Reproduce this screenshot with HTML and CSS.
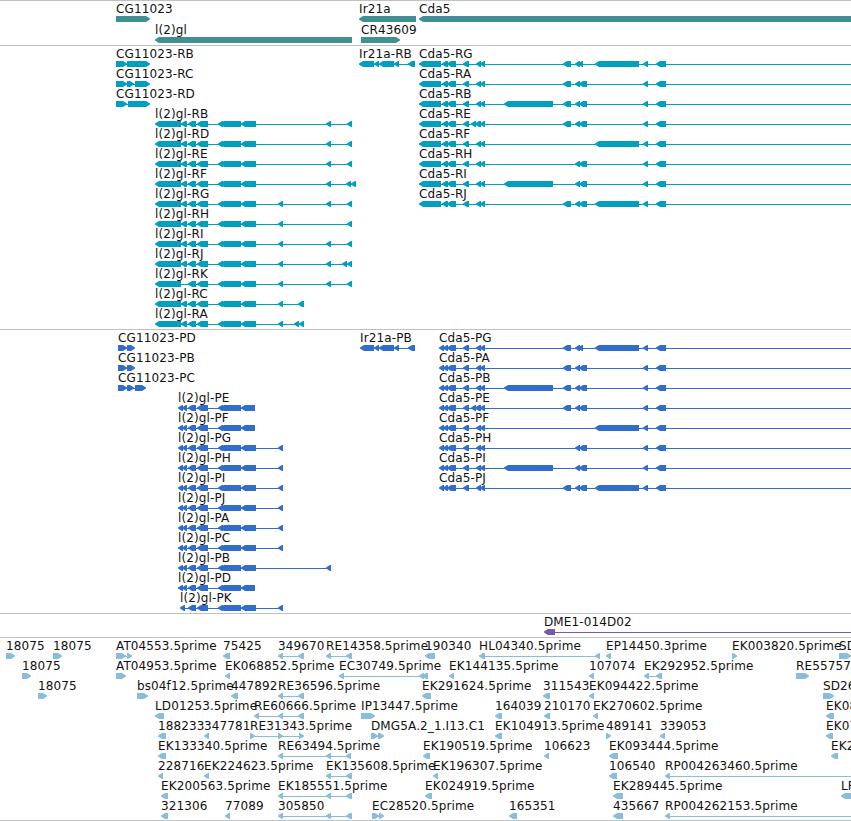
FILE: index.html
```html
<!DOCTYPE html>
<html lang="en">
<head>
    <meta charset="UTF-8">
    <meta name="viewport" content="width=device-width, initial-scale=1.0">
    <title>Genome browser</title>
    <link rel="stylesheet" href="styles.css">
</head>
<body>
    <main class="browser">
        <section class="track genes" id="genes"></section>
        <section class="track transcripts" id="transcripts"></section>
        <section class="track proteins" id="proteins"></section>
        <section class="track transposons" id="transposons"></section>
        <section class="track ests" id="ests"></section>
    </main>
    <script src="tracks.js"></script>
</body>
</html>
```

FILE: styles.css
```css
body {
    margin: 0;
    background-color: #fff;
    color: #111;
    font-family: "DejaVu Sans", sans-serif;
    font-size: 12px;
    line-height: 16px;
    letter-spacing: 0.12px;
}

.browser {
    height: 821px;
    overflow: hidden;
    border-top: 1px solid #c0c0c0;
    box-sizing: border-box;
}

.track {
    padding-bottom: 3px;
    border-bottom: 1px solid #c0c0c0;
}

.row {
    position: relative;
    height: 20px;
}

/* features sit at their own coordinate along the row */
.feature {
    position: absolute;
    top: 0;
    white-space: nowrap;
}

.label {
    display: block;
    height: 15px;
}

.glyph {
    display: block;
    height: 6px;
    overflow: visible;
    fill: currentColor;
}

.genes {
    padding-bottom: 2px;
}

.genes .row {
    height: 21px;
}

.genes .glyph {
    color: #408f93;
}

.transcripts .glyph {
    color: #009ebf;
}

.proteins .glyph {
    color: #306dcd;
}

.transposons .glyph {
    color: #775aa9;
}

.ests {
    padding-bottom: 2px;
}

.ests .glyph {
    color: #89bddd;
}
```

FILE: tracks.js
```js
// Each feature: [label, strand, blocks]. A block without an end only extends the line.
const glBase = '155-181 181-187 188-196 197-208 218-223 220-241 241-256';
const glCds = '178-183 182-187 188-196 197-208 218-223 220-241 ';
const glCdsLong = glCds + '241-256 278-283';
const cdaUtr = '419-441 442-448 447-456 463-469 ';
const cdaCds = '439-444 443-448 447-456 463-469 ';
const cdaEnd = ' 643-648 656-666 860';

// exons of the Cda5 isoforms between the shared first and last ones
const cda = {
    G: '476-481 480-485 563-571 575-580 578-583 595-639',
    A: '476-481 480-485 563-571 575-580 579-587',
    B: '476-481 480-485 504-553 563-571 575-580 579-587',
    E: '471-476 475-481 480-485 563-571 575-580 579-587',
    F: '476-481 480-485 595-639',
    H: '476-481 480-485 575-580 579-587',
    I: '476-481 480-485 504-553 575-580 579-587',
    J: '476-481 480-485 563-571 575-580 579-587 595-639'
};

function cdaR(name) {
    return ['Cda5-R' + name, '-', cdaUtr + cda[name] + cdaEnd];
}

function cdaP(name) {
    return ['Cda5-P' + name, '-', cdaCds + cda[name] + cdaEnd];
}

const tracks = {
    genes: [
        [['CG11023', '+', '116-150'], ['Ir21a', '-', '359-416'], ['Cda5', '-', '419-860']],
        [['l(2)gl', '-', '155-352'], ['CR43609', '+', '361-400']]
    ],
    transcripts: [
        [['CG11023-RB', '+', '116-127 127-150'], ['Ir21a-RB', '-', '359-374 374-379 379-394 394-399 408-415'], cdaR('G')],
        [['CG11023-RC', '+', '116-127 127-134 135-150'], cdaR('A')],
        [['CG11023-RD', '+', '116-127 128-150'], cdaR('B')],
        [['l(2)gl-RB', '-', glBase + ' 326-331 347-352'], cdaR('E')],
        [['l(2)gl-RD', '-', glBase + ' 326-331 347-352'], cdaR('F')],
        [['l(2)gl-RE', '-', glBase + ' 326-331 347-352'], cdaR('H')],
        [['l(2)gl-RF', '-', glBase + ' 326-331 346-351 351-356'], cdaR('I')],
        [['l(2)gl-RG', '-', glBase + ' 278-283 326-331 347-352'], cdaR('J')],
        [['l(2)gl-RH', '-', glBase + ' 278-283 347-352']],
        [['l(2)gl-RI', '-', glBase + ' 278-283 326-331 347-352']],
        [['l(2)gl-RJ', '-', glBase + ' 278-283 326-331 342-347 347-352']],
        [['l(2)gl-RK', '-', glBase.replace('181-187 ', '') + ' 278-283 326-331 347-352']],
        [['l(2)gl-RC', '-', glBase + ' 278-283 298-304']],
        [['l(2)gl-RA', '-', glBase + ' 278-283 294-299 299-304']]
    ],
    proteins: [
        [['CG11023-PD', '+', '118-127 127-135'], ['Ir21a-PB', '-', '360-374 374-379 379-394 394-399 408-415'], cdaP('G')],
        [['CG11023-PB', '+', '118-127 127-135'], cdaP('A')],
        [['CG11023-PC', '+', '118-127 127-134 135-146'], cdaP('B')],
        [['l(2)gl-PE', '-', glCds + '241-255'], cdaP('E')],
        [['l(2)gl-PF', '-', glCds + '241-255'], cdaP('F')],
        [['l(2)gl-PG', '-', glCdsLong], cdaP('H')],
        [['l(2)gl-PH', '-', glCdsLong], cdaP('I')],
        [['l(2)gl-PI', '-', glCdsLong], cdaP('J')],
        [['l(2)gl-PJ', '-', glCdsLong]],
        [['l(2)gl-PA', '-', glCdsLong]],
        [['l(2)gl-PC', '-', glCdsLong]],
        [['l(2)gl-PB', '-', glCds + '241-256 326-331']],
        [['l(2)gl-PD', '-', glCds + '241-255']],
        [['l(2)gl-PK', '-', '180-185 188-196 197-208 218-223 220-241 241-256 278-283']]
    ],
    transposons: [
        [['DME1-014D02', '-', '544-549 545-555 860']]
    ],
    ests: [
        [
            ['18075', '+', '6-15'], ['18075', '+', '53-62'], ['AT04553.5prime', '+', '116-126 127-132'],
            ['75425', '-', '223-230'], ['349670', '-', '278-283 298-304'], ['RE14358.5prime', '-', '326-331 346-352'],
            ['190340', '-', '425-435'], ['HL04340.5prime', '-', '479-485 595-600'], ['EP14450.3prime', '-', '606-611'],
            ['EK003820.5prime', '+', '732-737'], ['SD', '+', '839-851']
        ],
        [
            ['18075', '+', '22-31'], ['AT04953.5prime', '+', '116-126'], ['EK068852.5prime', '-', '225-230'],
            ['EC30749.5prime', '-', '339-344 419-424 422-428'], ['EK144135.5prime', '-', '449-454'],
            ['107074', '-', '589-594'], ['EK292952.5prime', '-', '644-649 656-662'], ['RE55757', '+', '796-809']
        ],
        [
            ['18075', '+', '38-47'], ['bs04f12.5prime', '+', '137-148'], ['447892', '-', '231-238'],
            ['RE36596.5prime', '-', '278-283 298-304'], ['EK291624.5prime', '-', '422-431'], ['311543', '-', '543-550'],
            ['EK094422.5prime', '-', '589-594'], ['SD26', '+', '823-834']
        ],
        [
            ['LD01253.5prime', '-', '155-164'], ['RE60666.5prime', '-', '254-259 278-283 298-304'],
            ['IP13447.5prime', '+', '361-375'], ['164039', '-', '495-502'], ['210170', '-', '544-550'],
            ['EK270602.5prime', '-', '593-598'], ['EK08', '-', '826-834']
        ],
        [
            ['188233', '-', '158-166'], ['347781', '-', '204-209'], ['RE31343.5prime', '+', '250-255 278-283 299-304'],
            ['DMG5A.2_1.I13.C1', '+', '371-378 378-384'], ['EK104913.5prime', '-', '495-502'],
            ['489141', '+', '606-611'], ['339053', '-', '660-665'], ['EK07', '-', '826-833']
        ],
        [
            ['EK133340.5prime', '-', '158-166'], ['RE63494.5prime', '-', '278-283 326-331 346-351'],
            ['EK190519.5prime', '-', '423-430'], ['106623', '-', '544-549'], ['EK093444.5prime', '-', '609-618'],
            ['EK2', '-', '831-838']
        ],
        [
            ['228716', '-', '158-163'], ['EK224623.5prime', '-', '204-209'], ['EK135608.5prime', '-', '326-331 346-352'],
            ['EK196307.5prime', '-', '433-438'], ['106540', '-', '609-617'], ['RP004263460.5prime', '-', '665-670 860']
        ],
        [
            ['EK200563.5prime', '-', '161-168'], ['EK185551.5prime', '-', '278-283 326-331 346-352'],
            ['EK024919.5prime', '-', '425-432'], ['EK289445.5prime', '-', '613-623'], ['LP', '-', '841-860']
        ],
        [
            ['321306', '-', '161-168'], ['77089', '-', '225-230'], ['305850', '-', '278-283 326-331 346-352'],
            ['EC28520.5prime', '+', '372-379 379-384'], ['165351', '-', '509-517'], ['435667', '-', '613-623'],
            ['RP004262153.5prime', '-', '665-670 860']
        ]
    ]
};

// block with a blunt pointed end in the direction of the strand
function arrow(start, end, strand) {
    const head = 4;
    if (strand === '+') {
        return `<polygon points="${start},0 ${end - head},0 ${end},2.4 ${end},3.6 ${end - head},6 ${start},6"/>`;
    }
    return `<polygon points="${end},0 ${start + head},0 ${start},2.4 ${start},3.6 ${start + head},6 ${end},6"/>`;
}

function drawFeature([name, strand, blocks]) {
    const parts = blocks.split(' ').map(b => b.split('-').map(Number));
    const left = parts[0][0];
    const last = parts[parts.length - 1];
    const width = last[last.length - 1] - left;
    let shapes = `<rect x="1" y="3" width="${width - 2}" height="1"/>`;
    for (const [start, end] of parts) {
        if (end) shapes += arrow(start - left, end - left, strand);
    }
    return `<div class="feature" style="left:${left}px"><span class="label">${name}</span>` +
        `<svg class="glyph" width="${width}">${shapes}</svg></div>`;
}

for (const id in tracks) {
    document.getElementById(id).innerHTML = tracks[id]
        .map(row => `<div class="row">${row.map(drawFeature).join('')}</div>`)
        .join('');
}
```
